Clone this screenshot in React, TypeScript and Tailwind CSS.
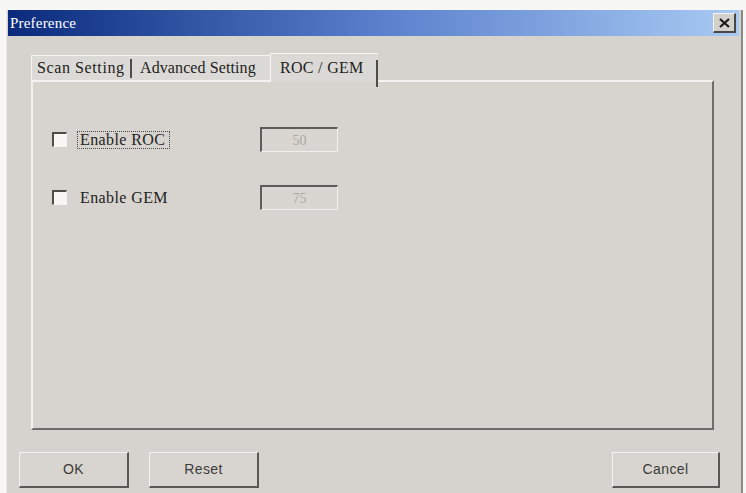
import React from "react";

const serif = { fontFamily: '"Liberation Serif", "DejaVu Serif", serif' };
const sans = { fontFamily: '"Liberation Sans", Arial, sans-serif' };

function Checkbox() {
  return (
    <div className="w-[15px] h-[15px] border-t-2 border-l-2 border-t-[#4e4c49] border-l-[#4e4c49] border-b border-r border-b-[#f4f3f1] border-r-[#f4f3f1] bg-[#f7f6f4] shrink-0" />
  );
}

function Field({ value }: { value: string }) {
  return (
    <div
      className="w-[78px] h-[25px] border-t-2 border-l-2 border-t-[#5e5c59] border-l-[#5e5c59] border-b border-r border-b-[#f1f0ee] border-r-[#f1f0ee] bg-[#d9d6d1] flex items-center justify-center text-[14px] text-[#a9a7a3]"
      style={serif}
    >
      {value}
    </div>
  );
}

function Btn({ label, w }: { label: string; w: string }) {
  return (
    <div
      className={`${w} h-[36px] border-t border-l border-t-[#f3f2f0] border-l-[#f3f2f0] border-b-2 border-r-2 border-b-[#5a5855] border-r-[#5a5855] bg-[#d8d5d0] flex items-center justify-center text-[14px] text-[#3c3b39] tracking-[0.4px]`}
      style={sans}
    >
      {label}
    </div>
  );
}

export default function App() {
  return (
    <div className="w-[746px] h-[493px] bg-[#f7f7f6] pt-[10px] pl-[6px] overflow-hidden">
      <div className="w-[737px] h-[483px] bg-[#d6d3ce] border-l border-l-[#ecebe8] border-r-2 border-r-[#8b8985] pl-[1px] pr-[2px] flex flex-col">
        {/* Title bar */}
        <div className="h-[26px] flex items-center justify-between pl-[2px] pr-[2px] bg-gradient-to-r from-[#0b2a7c] via-[#5a7ecb] to-[#a9caf3]">
          <span className="text-white text-[15px] tracking-[0.2px]" style={serif}>
            Preference
          </span>
          <div className="w-[23px] h-[20px] bg-[#d4d1cc] border-t border-l border-t-[#f5f4f2] border-l-[#f5f4f2] border-b-2 border-r-2 border-b-[#4a4846] border-r-[#4a4846] flex items-center justify-center mr-[1px]">
            <svg width="11" height="10" viewBox="0 0 11 10">
              <path d="M1 1 L10 9 M10 1 L1 9" stroke="#1a1a1a" strokeWidth="2.2" />
            </svg>
          </div>
        </div>

        {/* Tabs */}
        <div className="mt-[17px] ml-[23px] h-[27px] flex items-end" style={serif}>
          <div className="h-[25px] w-[101px] flex items-center justify-between bg-[#dcdad6] border-t border-l border-t-[#f6f5f3] border-l-[#f6f5f3] pl-[5px]">
            <span className="text-[16px] text-[#232221] tracking-[0.6px] leading-none">Scan Setting</span>
            <div className="w-[2px] h-[19px] bg-[#4e4c4a]" />
          </div>
          <div className="h-[25px] w-[138px] flex items-center bg-[#dcdad6] border-t border-t-[#f6f5f3] pl-[8px]">
            <span className="text-[16px] text-[#232221] tracking-[0.1px] leading-none">Advanced Setting</span>
          </div>
          <div className="relative z-10 -mb-[2px] h-[29px] w-[108px] flex items-start pt-[6px] justify-between bg-[#dbd9d5] border-t border-l border-t-[#f7f6f4] border-l-[#f7f6f4] pl-[9px]">
            <span className="text-[16px] text-[#232221] tracking-[0.3px] leading-none">ROC / GEM</span>
            <div className="w-[2px] h-[27px] bg-[#4e4c4a]" />
          </div>
        </div>

        {/* Panel */}
        <div className="ml-[23px] w-[683px] h-[350px] bg-[#d7d4cf] border-t-2 border-l-2 border-t-[#f3f2f0] border-l-[#f3f2f0] border-b-2 border-r-2 border-b-[#6f6d6a] border-r-[#6f6d6a] pl-[19px] pt-[45px] flex flex-col gap-[33px]" style={serif}>
          <div className="flex items-center h-[25px]">
            <Checkbox />
            <div className="ml-[10px] w-[93px] h-[18px] border border-dotted border-[#4a4846] flex items-center pl-[2px]">
              <span className="text-[16px] text-[#232221] tracking-[0.4px] leading-none">Enable ROC</span>
            </div>
            <div className="ml-[90px]">
              <Field value="50" />
            </div>
          </div>
          <div className="flex items-center h-[25px]">
            <Checkbox />
            <div className="ml-[10px] w-[93px] h-[18px] flex items-center pl-[3px]">
              <span className="text-[16px] text-[#232221] tracking-[0.4px] leading-none">Enable GEM</span>
            </div>
            <div className="ml-[90px]">
              <Field value="75" />
            </div>
          </div>
        </div>

        {/* Buttons */}
        <div className="mt-[22px] ml-[11px] flex items-start">
          <Btn label="OK" w="w-[110px]" />
          <div className="ml-[20px]">
            <Btn label="Reset" w="w-[110px]" />
          </div>
          <div className="ml-auto mr-[19px]">
            <Btn label="Cancel" w="w-[108px]" />
          </div>
        </div>
      </div>
    </div>
  );
}
